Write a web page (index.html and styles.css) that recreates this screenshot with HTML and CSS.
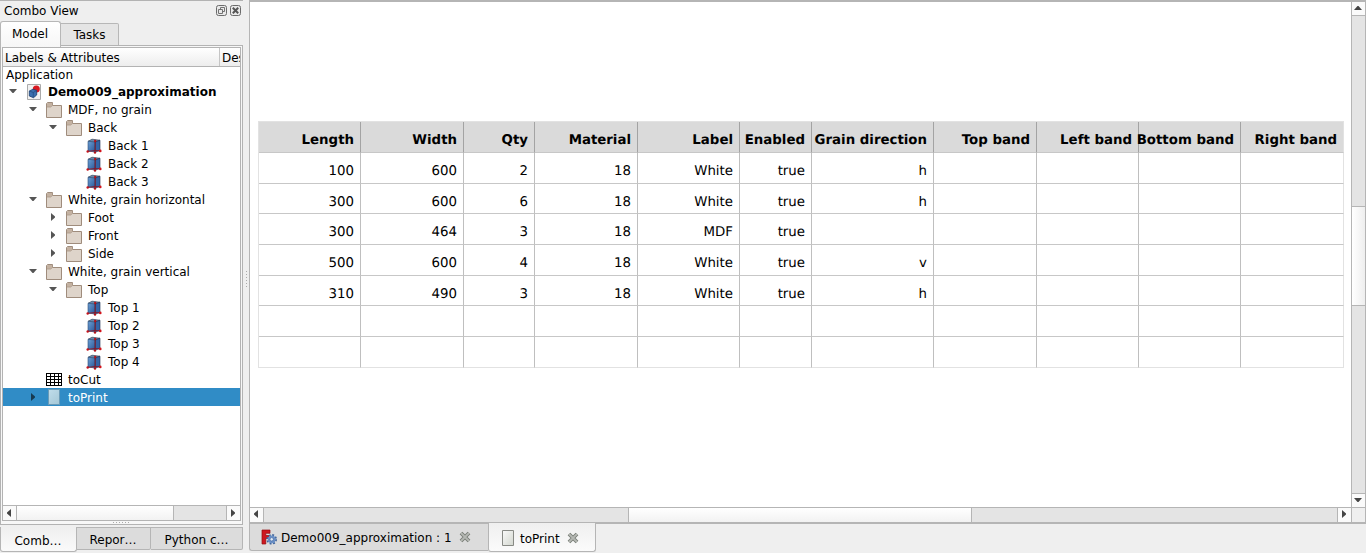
FILE: index.html
```
<!DOCTYPE html>
<html lang="en">
<head>
<meta charset="utf-8">
<title>FreeCAD</title>
<link rel="stylesheet" href="styles.css">
</head>
<body>
<svg class="defs" aria-hidden="true">
  <defs>
    <linearGradient id="cubeFront" x1="0" y1="0" x2="1" y2="1"><stop offset="0" stop-color="#6c9fd4"/><stop offset="1" stop-color="#285596"/></linearGradient>
    <linearGradient id="page" x1="0" y1="0" x2="1" y2="1"><stop offset="0" stop-color="#fafafa"/><stop offset="1" stop-color="#d3d7cf"/></linearGradient>
    <symbol id="folder" viewBox="0 0 16 16"><path d="M.5 15.500V1.500L1.500.5H6.500V3.500H15.500V15.500Z" fill="#ded4ca" stroke="#9f8c7c"/><path d="M1 5V1.500L1.500 1H6.200V3.500L4.500 5Z" fill="#c4b2a2"/><path d="M1 5H4.700L6.500 3.500" fill="none" stroke="#ab9989" stroke-width=".8"/></symbol>
    <symbol id="cube" viewBox="0 0 16 16"><path d="M2 3.300 6 1.200 14 2.200 9.500 4.100Z" fill="#6687aa" stroke="#26374e" stroke-width=".6"/><path d="M2 3.300 9.200 4.100V14L2 13Z" fill="url(#cubeFront)" stroke="#294b76" stroke-width=".6"/><path d="M9.200 4.100 14 2.200V12.500L9.200 14Z" fill="#3565a6" stroke="#1b3153" stroke-width=".6"/><path d="M9.200 3V12.500L1.300 13.500M9.200 12.500 14.700 13" fill="none" stroke="#8b1420" stroke-width=".9"/><circle cx="9.200" cy="2.900" r="1.200" fill="#b3131b"/><circle cx="1.700" cy="13.500" r="1.200" fill="#c3131b"/><circle cx="9" cy="14.500" r="1.200" fill="#b3131b"/><circle cx="14.300" cy="12.900" r="1.300" fill="#d3131b"/></symbol>
    <symbol id="doc" viewBox="0 0 16 16"><path d="M1.500.5H14.500V15.500H1.500Z" fill="#f1f1f1" stroke="#aaa"/><circle cx="10.300" cy="5" r="3.500" fill="#d81820"/><path d="M3.300 7 7 5.200 10.700 6.400V11L7.500 13.700 3.300 12Z" fill="#3b6fae" stroke="#1d3f70" stroke-width=".8"/><path d="M3.300 7 7.300 8.500 10.700 6.400M7.300 8.500V13.500" fill="none" stroke="#234a80" stroke-width=".7"/></symbol>
    <symbol id="sheet" viewBox="0 0 16 13"><path d="M0 0H16V13H0Z"/><path d="M1 1h3v2H1zM5 1h3v2H5zM9 1h3v2H9zM13 1h2v2h-2zM1 4h3v2H1zM5 4h3v2H5zM9 4h3v2H9zM13 4h2v2h-2zM1 7h3v2H1zM5 7h3v2H5zM9 7h3v2H9zM13 7h2v2h-2zM1 10h3v2H1zM5 10h3v2H5zM9 10h3v2H9zM13 10h2v2h-2z" fill="#fff"/></symbol>
    <symbol id="down" viewBox="0 0 8 8"><path d="M0 2H8L4.500 6h-1Z"/></symbol>
    <symbol id="up" viewBox="0 0 8 8"><path d="M0 6H8L4.500 2h-1Z"/></symbol>
    <symbol id="right" viewBox="0 0 8 8"><path d="M2 0V8L6 4.500v-1Z"/></symbol>
    <symbol id="left" viewBox="0 0 8 8"><path d="M6 0V8L2 4.500v-1Z"/></symbol>
    <symbol id="close" viewBox="0 0 12 12"><path d="M2 2 10 10M10 2 2 10" stroke="#777d75" stroke-width="3.800"/><path d="M2 2 10 10M10 2 2 10" stroke="#b5b8b3" stroke-width="1.800"/></symbol>
  </defs>
</svg>
<div class="window">
  <aside class="dock">
    <header class="dock-title"><span>Combo View</span>
      <svg class="tool" viewBox="0 0 11 11"><rect x=".5" y=".5" width="10" height="10" rx="2" fill="#e9e9e9" stroke="#6b6b6b"/><path d="M4.500 4.500V2.500H8.500V6.500H6.500M2.500 4.500H6.500V8.500H2.500Z" fill="none" stroke="#666" stroke-width=".9"/></svg>
      <svg class="tool" viewBox="0 0 11 11"><rect x=".5" y=".5" width="10" height="10" rx="2" fill="#e9e9e9" stroke="#6b6b6b"/><path d="M2.800 2.800 8.200 8.200M8.200 2.800 2.800 8.200" stroke="#555" stroke-width="2"/></svg>
    </header>
    <nav class="top-tabs"><div class="tab active">Model</div><div class="tab">Tasks</div></nav>
    <section class="pane">
      <div class="tree">
        <div class="tree-head"><span>Labels &amp; Attributes</span><span>Des</span></div>
        <div class="rows">
          <div class="row short root">Application</div>
          <div class="row short d0"><svg class="arrow"><use href="#down"/></svg><svg class="icon doc"><use href="#doc"/></svg><b>Demo009_approximation</b></div>
          <div class="row d1"><svg class="arrow"><use href="#down"/></svg><svg class="icon"><use href="#folder"/></svg>MDF, no grain</div>
          <div class="row d2"><svg class="arrow"><use href="#down"/></svg><svg class="icon"><use href="#folder"/></svg>Back</div>
          <div class="row d3"><svg class="icon"><use href="#cube"/></svg>Back 1</div>
          <div class="row d3"><svg class="icon"><use href="#cube"/></svg>Back 2</div>
          <div class="row d3"><svg class="icon"><use href="#cube"/></svg>Back 3</div>
          <div class="row d1"><svg class="arrow"><use href="#down"/></svg><svg class="icon"><use href="#folder"/></svg>White, grain horizontal</div>
          <div class="row d2"><svg class="arrow"><use href="#right"/></svg><svg class="icon"><use href="#folder"/></svg>Foot</div>
          <div class="row d2"><svg class="arrow"><use href="#right"/></svg><svg class="icon"><use href="#folder"/></svg>Front</div>
          <div class="row d2"><svg class="arrow"><use href="#right"/></svg><svg class="icon"><use href="#folder"/></svg>Side</div>
          <div class="row d1"><svg class="arrow"><use href="#down"/></svg><svg class="icon"><use href="#folder"/></svg>White, grain vertical</div>
          <div class="row d2"><svg class="arrow"><use href="#down"/></svg><svg class="icon"><use href="#folder"/></svg>Top</div>
          <div class="row d3"><svg class="icon"><use href="#cube"/></svg>Top 1</div>
          <div class="row d3"><svg class="icon"><use href="#cube"/></svg>Top 2</div>
          <div class="row d3"><svg class="icon"><use href="#cube"/></svg>Top 3</div>
          <div class="row d3"><svg class="icon"><use href="#cube"/></svg>Top 4</div>
          <div class="row d1 leaf"><svg class="icon sheet"><use href="#sheet"/></svg>toCut</div>
          <div class="row d1 selected"><svg class="arrow"><use href="#right"/></svg><span class="page-icon"></span>toPrint</div>
        </div>
        <div class="hbar"><span class="button"><svg><use href="#left"/></svg></span><span class="thumb"></span><span class="track"></span><span class="button end"><svg><use href="#right"/></svg></span></div>
      </div>
      <div class="grip"></div>
    </section>
    <nav class="dock-tabs"><div class="tab active">Comb…</div><div class="tab">Repor…</div><div class="tab">Python c…</div></nav>
  </aside>
  <div class="splitter"><i></i></div>
  <main class="main">
    <div class="view">
      <div class="canvas">
        <div class="table">
          <b>Length</b><b>Width</b><b>Qty</b><b>Material</b><b>Label</b><b>Enabled</b><b>Grain direction</b><b>Top band</b><b>Left band</b><b>Bottom band</b><b>Right band</b>
          <span>100</span><span>600</span><span>2</span><span>18</span><span>White</span><span>true</span><span>h</span><span></span><span></span><span></span><span></span>
          <span>300</span><span>600</span><span>6</span><span>18</span><span>White</span><span>true</span><span>h</span><span></span><span></span><span></span><span></span>
          <span>300</span><span>464</span><span>3</span><span>18</span><span>MDF</span><span>true</span><span></span><span></span><span></span><span></span><span></span>
          <span>500</span><span>600</span><span>4</span><span>18</span><span>White</span><span>true</span><span>v</span><span></span><span></span><span></span><span></span>
          <span>310</span><span>490</span><span>3</span><span>18</span><span>White</span><span>true</span><span>h</span><span></span><span></span><span></span><span></span>
          <span></span><span></span><span></span><span></span><span></span><span></span><span></span><span></span><span></span><span></span><span></span>
          <span></span><span></span><span></span><span></span><span></span><span></span><span></span><span></span><span></span><span></span><span></span>
        </div>
      </div>
      <div class="vbar"><span class="button"><svg><use href="#up"/></svg></span><span class="track before"></span><span class="thumb"></span><span class="track"></span><span class="button end"><svg><use href="#down"/></svg></span></div>
      <div class="hbar main-hbar"><span class="button"><svg><use href="#left"/></svg></span><span class="track before"></span><span class="thumb"></span><span class="track"></span><span class="button end"><svg><use href="#right"/></svg></span></div>
      <div class="corner"></div>
    </div>
    <nav class="doc-tabs">
      <div class="tab"><svg class="logo" viewBox="0 0 16 16"><path d="M1 1H9V4.300H4.800V6.500H8V9.500H4.800V15H1Z" fill="#cf1720" stroke="#8f0b10" stroke-width=".7"/><circle cx="10.700" cy="10.300" r="4.400" fill="none" stroke="#3f659d" stroke-width="1.800" stroke-dasharray="1.900 1.555"/><circle cx="10.700" cy="10.300" r="2.800" fill="#e4ebf3" stroke="#6a8fc5" stroke-width="2.200"/><circle cx="10.700" cy="10.300" r="1.700" fill="none" stroke="#3f659d" stroke-width=".6"/></svg><span>Demo009_approximation : 1</span><svg class="close"><use href="#close"/></svg></div>
      <div class="tab active"><svg class="page-svg" viewBox="0 0 12 16"><path d="M.5.5H11.500V15.500H.5Z" fill="url(#page)" stroke="#888a85"/></svg><span>toPrint</span><svg class="close"><use href="#close"/></svg></div>
    </nav>
  </main>
</div>
</body>
</html>
```
FILE: styles.css
```
* { box-sizing: border-box; }
body { margin: 0; background: #efefef; color: #000; font: 12px/18px "DejaVu Sans", sans-serif; }
svg { display: block; flex: none; }
.defs { position: absolute; width: 0; height: 0; }
.window { display: flex; width: 1366px; height: 553px; overflow: hidden; white-space: nowrap; }
.dock { width: 243px; flex: none; display: flex; flex-direction: column; border-top: 1px solid #b3b3b3; }
.dock-title { display: flex; align-items: center; height: 20px; padding: 0 2px 0 4px; gap: 3px; }
.dock-title span { flex: 1; }
.tool { width: 11px; height: 11px; margin-top: -1px; }
.top-tabs { display: flex; align-items: flex-end; height: 25px; }
.top-tabs .tab { height: 23px; width: 58px; border: 1px solid #b7b7b7; border-left: 0; border-radius: 0 2px 0 0; background: #e5e5e5; text-align: center; line-height: 23px; }
.top-tabs .active { width: 61px; height: 26px; background: linear-gradient(#fff, #f6f6f6); border: 1px solid #b7b7b7; border-bottom: 0; border-radius: 3px 3px 0 0; line-height: 24px; padding-right: 1px; align-self: flex-start; z-index: 1; }
.pane { height: 481px; margin-top: -1px; border: 1px solid #b3b3b3; background: #f7f7f7; padding: 1px 1px 0; }
.tree { height: 474px; border: 1px solid #b3b3b3; background: #fff; display: flex; flex-direction: column; }
.tree-head { display: flex; height: 19px; border-bottom: 1px solid #b3b3b3; background: linear-gradient(#fff, #ededed); line-height: 20px; }
.tree-head span { padding-left: 2px; overflow: hidden; }
.tree-head span:first-child { width: 217px; border-right: 1px solid #c5c5c5; }
.tree-head span:last-child { width: 20px; }
.rows { flex: 1; margin-top: -1px; }
.row { display: flex; align-items: center; height: 18px; padding-top: 2px; line-height: 16px; }
.row.short { height: 17px; }
.root { padding-left: 3px; }
.d0 { padding-left: 6px; }
.d1 { padding-left: 26px; }
.d2 { padding-left: 46px; }
.d3 { padding-left: 83px; }
.leaf { padding-left: 43px; }
.arrow { width: 8px; height: 8px; margin: -2px 9px 0 0; fill: #555; }
.icon { width: 16px; height: 16px; margin: -1px 6px -1px 0; }
.d1 .icon, .d2 .icon { margin-top: 0; margin-bottom: 0; }
.icon.sheet { height: 13px; margin-top: -1px; }
.selected { background: #308cc6; color: #fff; }
.selected .arrow { fill: #173a50; }
.page-icon { width: 12px; height: 16px; margin: -2px 8px 0 2px; background: linear-gradient(135deg, #bfdcea, #a5c8d7); border: 1px solid #6b9bb7; }
.hbar { display: flex; height: 15px; border-top: 1px solid #b5b5b5; background: #e4e4e4; }
.button { display: flex; align-items: center; justify-content: center; width: 14px; flex: none; border-right: 1px solid #b5b5b5; background: #fafafa; }
.button svg { width: 8px; height: 8px; fill: #444; }
.hbar .button svg { margin: 0 1px 0 0; }
.hbar .end { border-right: 0; border-left: 1px solid #b5b5b5; }
.hbar .end svg { margin-right: 2px; }
.hbar .thumb { width: 157px; border-right: 1px solid #b5b5b5; background: linear-gradient(#fff, #f2f2f2); }
.track { flex: 1; background: #e4e4e4; }
.grip { width: 17px; height: 1px; margin: 1px auto 0; background: repeating-linear-gradient(90deg, #aaa 0 1px, transparent 1px 3px); }
.dock-tabs { display: flex; height: 26px; margin-top: 2px; align-items: flex-start; }
.dock-tabs .tab { height: 23px; width: 74px; border: 1px solid #b5b5b5; border-left: 0; background: #dcdcdc; text-align: center; line-height: 24px; border-radius: 0 0 2px 0; padding-right: 1px; }
.dock-tabs .active { width: 77px; height: 25px; border-left: 1px solid #b5b5b5; border-top: 0; background: linear-gradient(#efefef, #fafafa); line-height: 28px; border-radius: 0 0 3px 3px; }
.dock-tabs .tab:last-child { width: 92px; padding: 0; }
.splitter { width: 6px; display: flex; align-items: flex-start; justify-content: center; padding-top: 271px; }
.splitter i { width: 1px; height: 17px; background: repeating-linear-gradient(#aaa 0 1px, transparent 1px 3px); }
.main { flex: 1; display: flex; flex-direction: column; }
.view { display: grid; grid-template: 505px 15px / 1101px 14px; width: 1117px; height: 522px; border: 1px solid #b5b5b5; border-top-width: 2px; border-bottom: 0; box-shadow: 0 1px 0 #b5b5b5; }
.canvas { background: #fff; padding: 119px 0 0 8px; }
.table { display: grid; width: 1086px; grid-template-columns: 102px 103px 71px 103px 102px 72px 122px 103px 102px 102px 103px; grid-template-rows: 31px 31px 30px 31px 31px 30px 31px 31px; border-left: 1px solid #e2e2e2; border-top: 1px solid #e2e2e2; font-size: 13.33px; text-rendering: geometricPrecision; }
.table b, .table span { display: flex; align-items: center; justify-content: flex-end; padding: 8px 6px 0 0; border-right: 1px solid rgba(0, 0, 0, .25); border-bottom: 1px solid #c7c7c7; }
.table > :nth-child(11n) { border-right-color: #e2e2e2; }
.table > :nth-child(n + 78) { border-bottom-color: #e2e2e2; }
.table b { background: #dadada; }
.vbar { display: flex; flex-direction: column; border-left: 1px solid #b5b5b5; background: #e4e4e4; }
.vbar .button { width: 13px; height: 14px; border-right: 0; border-bottom: 1px solid #b5b5b5; }
.vbar .button svg { margin: -1px 1px 0 0; }
.vbar .end { border-bottom: 0; border-top: 1px solid #b5b5b5; }
.vbar .before { flex: none; height: 190px; }
.vbar .thumb { height: 100px; border: solid #b5b5b5; border-width: 1px 0; background: linear-gradient(90deg, #fff, #eee); }
.main-hbar .before { flex: none; width: 364px; }
.main-hbar .thumb { width: 344px; border-left: 1px solid #b5b5b5; }
.main-hbar .button svg { margin-top: -2px; }
.corner { border: solid #b5b5b5; border-width: 1px 0 0 1px; background: #efefef; }
.doc-tabs { display: flex; height: 31px; margin-top: 1px; border-top: 1px solid #b5b5b5; }
.doc-tabs .tab { display: flex; align-items: center; width: 239px; height: 27px; border: solid #b5b5b5; border-width: 0 0 1px 1px; border-radius: 0 0 0 3px; background: #dcdcdc; padding: 2px 0 0 11px; }
.doc-tabs .active { width: 108px; height: 29px; margin-top: -1px; border-width: 0 1px 1px; border-radius: 0 0 3px 3px; background: linear-gradient(#efefef, #fbfbfb); padding: 3px 0 0 13px; }
.logo { width: 16px; height: 16px; margin: -3px 4px 0 0; }
.page-svg { width: 12px; height: 16px; margin: -2px 6px 0 0; }
.close { width: 12px; height: 12px; margin: -2px 0 0 7px; }
```
